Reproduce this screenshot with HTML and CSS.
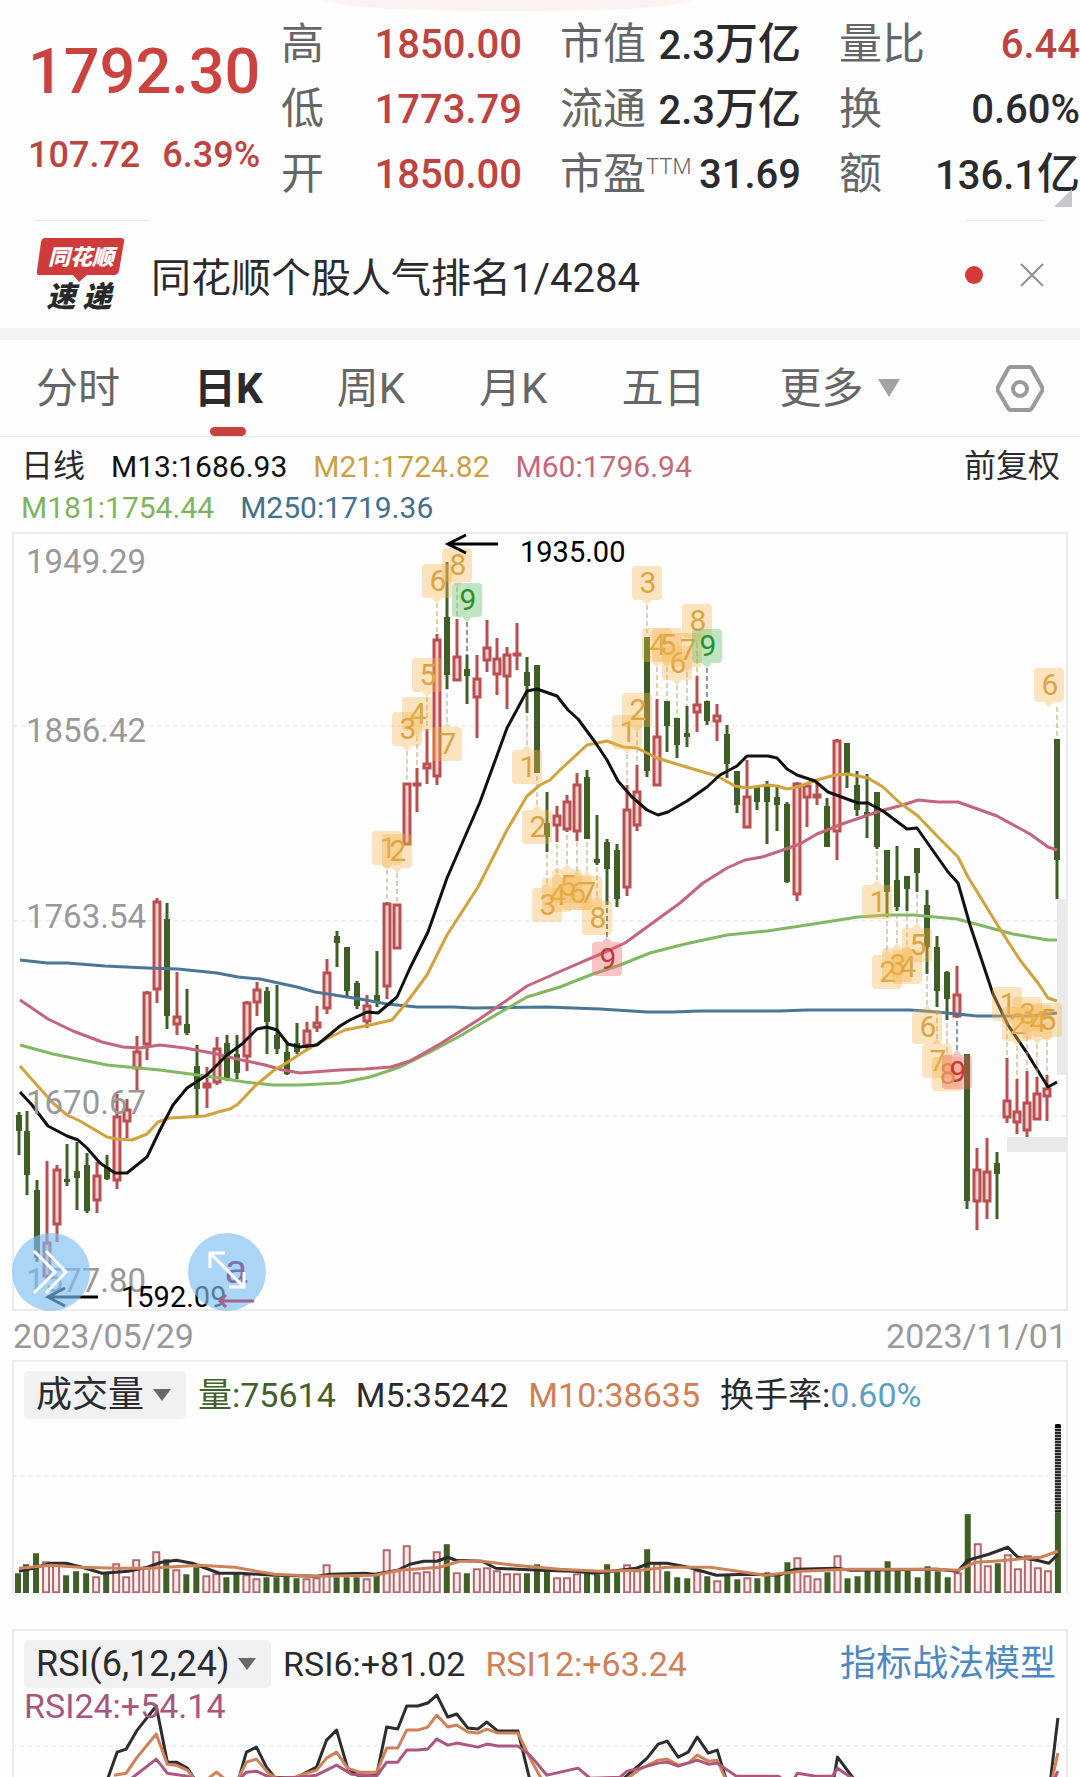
FILE: index.html
```html
<!DOCTYPE html>
<html lang="zh-CN">
<head>
  <meta charset="utf-8">
  <meta name="viewport" content="width=device-width, initial-scale=1">
  <title>日K</title>
  <link rel="stylesheet" href="styles.css">
</head>
<body>
  <!-- Quote -->
  <header class="quote">
    <div class="quote-main">
      <div class="price">1792.30</div>
      <div class="change"><span>107.72</span><span>6.39%</span></div>
    </div>
    <dl class="stats">
      <div class="stat"><dt>高</dt><dd class="up">1850.00</dd></div>
      <div class="stat"><dt>市值</dt><dd>2.3<span class="unit">万亿</span></dd></div>
      <div class="stat"><dt>量比</dt><dd class="up">6.44</dd></div>
      <div class="stat"><dt>低</dt><dd class="up">1773.79</dd></div>
      <div class="stat"><dt>流通</dt><dd>2.3<span class="unit">万亿</span></dd></div>
      <div class="stat"><dt>换</dt><dd>0.60%</dd></div>
      <div class="stat"><dt>开</dt><dd class="up">1850.00</dd></div>
      <div class="stat"><dt>市盈<sup>TTM</sup></dt><dd>31.69</dd></div>
      <div class="stat"><dt>额</dt><dd>136.1<span class="unit">亿</span></dd></div>
    </dl>
    <span class="corner"></span>
  </header>

  <!-- News -->
  <section class="news">
    <div class="news-lines"><span></span><span></span></div>
    <div class="news-row">
      <svg class="logo" viewBox="0 0 90 74" role="img" aria-label="同花顺速递">
        <path d="M9 0h76q4 0 3 4l-5 29q-1 4-5 4H51l-8 7-6-7H4q-4 0-3-4L5 4q1-4 4-4z" fill="#cf3b3a"/>
        <text class="logo-top" x="45" y="27">同花顺</text>
        <text class="logo-bottom" x="43" y="69">速 递</text>
      </svg>
      <a class="news-title" href="#">同花顺个股人气排名1/4284</a>
      <span class="dot"></span>
      <button class="close" aria-label="关闭">
        <svg viewBox="0 0 24 24"><path d="M1 1l22 22M23 1L1 23"/></svg>
      </button>
    </div>
  </section>

  <!-- Tabs -->
  <nav class="tabs">
    <button>分时</button>
    <button class="active">日K</button>
    <button>周K</button>
    <button>月K</button>
    <button>五日</button>
    <button class="more">更多<i class="arrow"></i></button>
    <button class="settings" aria-label="设置">
      <svg viewBox="0 0 48 48">
        <path d="M15 2h18q2 0 3 2l10 18q1 2 0 4L36 43q-1 2-3 2H15q-2 0-3-2L2 26q-1-2 0-4L12 4q1-2 3-2z"/>
        <circle cx="24" cy="24" r="7"/>
      </svg>
    </button>
  </nav>

  <!-- Candles -->
  <section class="legend">
    <div class="legend-row">
      <span class="period">日线</span>
      <span class="m13">M13:1686.93</span>
      <span class="m21">M21:1724.82</span>
      <span class="m60">M60:1796.94</span>
      <button class="adjust">前复权</button>
    </div>
    <div class="legend-row">
      <span class="m181">M181:1754.44</span>
      <span class="m250">M250:1719.36</span>
    </div>
  </section>
  <section class="candles">
    <svg id="candles" viewBox="0 532 1080 780"></svg>
    <button class="float forward" aria-label="下一页">
      <svg viewBox="0 0 78 78"><path d="M22 18l21 21-21 21M34 18l20 21-20 21"/></svg>
    </button>
    <button class="float expand" aria-label="全屏">
      <svg viewBox="0 0 78 78">
        <text class="mark" x="48" y="50">a</text>
        <path d="M22 35V20h15M22 20l34 34M41 54h15V39"/>
        <path class="mark-line" d="M66 68H32M38 62l-6 6 6 6"/>
      </svg>
    </button>
  </section>
  <div class="dates"><time>2023/05/29</time><time>2023/11/01</time></div>

  <!-- Volume -->
  <section class="panel volume">
    <div class="panel-head">
      <label class="picker"><select aria-label="指标"><option>成交量</option></select><i class="arrow"></i></label>
      <span class="down">量:75614</span>
      <span class="ink">M5:35242</span>
      <span class="orange">M10:38635</span>
      <span class="ink">换手率:<b class="rate">0.60%</b></span>
    </div>
    <svg id="volume" viewBox="15 1424 1050 169"></svg>
  </section>

  <!-- RSI -->
  <section class="panel rsi">
    <div class="panel-head">
      <label class="picker"><select aria-label="指标"><option>RSI(6,12,24)</option></select><i class="arrow"></i></label>
      <span class="ink">RSI6:+81.02</span>
      <span class="orange">RSI12:+63.24</span>
      <a class="model" href="#">指标战法模型</a>
    </div>
    <div class="rsi-body">
      <span class="rsi24">RSI24:+54.14</span>
      <svg id="rsi" viewBox="15 1691 1050 86"></svg>
    </div>
  </section>

  <script src="chart.js"></script>
</body>
</html>
```

FILE: styles.css
```css
* {
  box-sizing: border-box;
}

body {
  margin: 0;
  background: #fefefe;
  color: #2b2b2d;
  font-family: Roboto, "Noto Sans CJK SC", sans-serif;
  overflow-x: hidden;
}

button, select {
  border: none;
  padding: 0;
  margin: 0;
  background: none;
  font: inherit;
  color: inherit;
}

a {
  color: inherit;
  text-decoration: none;
}

svg {
  display: block;
}

.ink { color: #2b2b2d; }
.up { color: #bf4340; }
.down { color: #41602a; }
.orange { color: #d08056; }

/* quote */
.quote {
  position: relative;
  display: flex;
  padding-top: 12px;
  background: radial-gradient(ellipse 190px 12px at 47% 0, #fcf2f1 90%, transparent);
}

.quote-main {
  flex: 0 0 281px;
  padding: 22px 0 0 28px;
  font-weight: 500;
  white-space: nowrap;
}

.price {
  font-size: 63px;
  line-height: 76px;
  color: #cb423e;
}

.change {
  display: flex;
  gap: 22px;
  padding-top: 22px;
  font-size: 36px;
  line-height: 46px;
  color: #bf4340;
}

.stats {
  flex: 1;
  display: grid;
  grid-template-columns: repeat(3, 1fr);
  column-gap: 38px;
  margin: 0;
}

.stat {
  display: flex;
  justify-content: space-between;
  height: 65px;
  line-height: 65px;
  white-space: nowrap;
}

.stat dt {
  font-size: 43px;
  color: #666;
}

.stat dt sup {
  font-size: 22px;
  font-weight: 300;
  line-height: 0;
}

.stat dd {
  margin: 0;
  font-size: 40px;
  font-weight: 500;
}

.stat .unit {
  font-size: 43px;
}

.corner {
  position: absolute;
  right: 8px;
  bottom: 0;
  border: 9px solid transparent;
  border-right-color: #c9c7cb;
  border-bottom-color: #c9c7cb;
}

/* news */
.news {
  padding-top: 13px;
  border-bottom: 12px solid #f4f3f5;
}

.news-lines {
  display: flex;
  justify-content: space-between;
  padding: 0 36px;
}

.news-lines span {
  width: 112px;
  border-top: 1px solid #e4e4e4;
}

.news-lines span:last-child {
  width: 78px;
}

.news-row {
  display: flex;
  align-items: center;
  height: 107px;
  padding: 0 36px;
}

.logo {
  width: 90px;
  height: 74px;
}

.logo text {
  font-style: italic;
  font-weight: 900;
  text-anchor: middle;
}

.logo-top {
  font-size: 22px;
  fill: #fff;
}

.logo-bottom {
  font-size: 29px;
  fill: #29292b;
}

.news-title {
  flex: 1;
  padding-left: 25px;
  font-size: 40px;
}

.dot {
  width: 18px;
  height: 18px;
  border-radius: 50%;
  background: #d53a37;
}

.close {
  width: 24px;
  height: 24px;
  margin-left: 37px;
}

.close svg {
  fill: none;
  stroke: #8f8f8f;
  stroke-width: 2;
}

/* tabs */
.tabs {
  display: flex;
  gap: 74px;
  height: 97px;
  padding: 2px 36px 0;
  border-bottom: 1px solid #e6e6e6;
  font-size: 42px;
  line-height: 94px;
  color: #666;
}

.tabs button {
  position: relative;
  white-space: nowrap;
}

.tabs .active {
  font-weight: bold;
  color: #2b2b2d;
}

.tabs .active::after {
  content: "";
  position: absolute;
  left: 50%;
  bottom: 0;
  width: 36px;
  height: 9px;
  margin-left: -18px;
  border-radius: 5px;
  background: #c8433e;
}

.arrow {
  display: inline-block;
  border: 11px solid transparent;
  border-top: 18px solid #a2a2a2;
  border-bottom: 0;
}

.more .arrow {
  margin-left: 15px;
  vertical-align: 6px;
}

.tabs .settings {
  margin-left: auto;
}

.settings svg {
  width: 48px;
  height: 48px;
  fill: none;
  stroke: #9a9a9a;
  stroke-width: 4;
}

/* legend */
.legend {
  padding: 9px 20px 4px 21px;
  font-size: 30px;
}

.legend-row {
  display: flex;
  gap: 26px;
  height: 41px;
  line-height: 41px;
}

.period { font-size: 32px; }
.m13 { color: #111; }
.m21 { color: #cba043; }
.m60 { color: #c56a7c; }
.m181 { color: #7fb45c; }
.m250 { color: #43708f; }

.adjust {
  margin-left: auto;
  font-size: 32px;
}

/* candle chart */
.candles {
  position: relative;
}

.frame {
  fill: none;
  stroke: #ececec;
  stroke-width: 2;
}

.grid {
  stroke: #e6e3e6;
  stroke-width: 1;
  stroke-dasharray: 5 3;
}

.shade {
  fill: #eaeaea;
}

.axis {
  font-size: 33px;
  fill: #999;
}

.extreme {
  font-size: 29px;
  fill: #000;
}

.pointer {
  fill: none;
  stroke: #000;
  stroke-width: 3;
}

.line {
  fill: none;
  stroke-width: 3;
  stroke-linejoin: round;
}

.badge path {
  opacity: 0.38;
}

.badge text {
  font-size: 30px;
  text-anchor: middle;
}

.badge line {
  stroke-dasharray: 5 3;
}

.float {
  position: absolute;
  bottom: 1px;
  width: 78px;
  height: 78px;
  border-radius: 50%;
  background: rgba(126, 190, 243, 0.65);
}

.float path {
  fill: none;
  stroke: #fff;
  stroke-width: 3;
}

.forward { left: 12px; }
.expand { left: 188px; }

.float .mark {
  font: 40px "Liberation Sans", sans-serif;
  text-anchor: middle;
  fill: #7c6fae;
}

.float .mark-line {
  stroke: #a0668f;
}

.dates {
  display: flex;
  justify-content: space-between;
  padding: 0 13px;
  font-size: 34px;
  line-height: 48px;
  color: #999;
}

/* indicator panels */
.panel {
  margin: 0 12px;
  border: 2px solid #ececec;
  border-bottom: none;
}

.panel-head {
  display: flex;
  align-items: center;
  gap: 20px;
  height: 62px;
  padding: 4px 10px 0;
  font-size: 34px;
  line-height: 48px;
  white-space: nowrap;
}

.picker {
  position: relative;
  display: block;
  margin-right: -8px;
}

.picker select {
  display: block;
  height: 48px;
  padding: 0 41px 0 12px;
  border-radius: 5px;
  background: #f1f1f3;
  font-size: 36px;
  appearance: none;
}

.picker .arrow {
  position: absolute;
  right: 15px;
  top: 18px;
  border-width: 9px;
  border-top: 12px solid #68686a;
  border-bottom: 0;
  pointer-events: none;
}

.rate {
  font-weight: normal;
  color: #5c9fc4;
}

.volume {
  margin-bottom: 36px;
}

.model {
  margin-left: auto;
  font-size: 36px;
  color: #4f87c2;
}

.rsi-body {
  position: relative;
  margin-top: -2px;
}

.rsi24 {
  position: absolute;
  left: 10px;
  top: 0;
  font-size: 34px;
  line-height: 30px;
  color: #a8567d;
}
```

FILE: chart.js
```js
var RED = '#b94f50';
var GREEN = '#3f5f26';

// [up, high, body top, body bottom, low]
var candles = [
  [0,1112,1115,1131,1155],[0,1111,1131,1175,1195],[0,1180,1190,1258,1262],[1,1161,1242,1277,1280],[1,1165,1169,1225,1242],
  [0,1144,1179,1182,1186],[0,1142,1171,1178,1210],[0,1153,1165,1211,1213],[1,1162,1175,1201,1213],[0,1155,1167,1179,1180],
  [1,1094,1116,1181,1189],[1,1099,1109,1122,1138],[1,1036,1051,1069,1090],[1,991,992,1045,1060],[1,898,901,990,1003],
  [0,903,919,1016,1029],[1,972,1016,1025,1035],[0,989,1024,1033,1035],[0,1045,1066,1089,1118],[1,1067,1083,1088,1108],
  [1,1037,1048,1083,1085],[0,1035,1043,1079,1081],[0,1035,1054,1073,1079],[1,1001,1002,1057,1071],[1,982,989,1003,1016],
  [0,987,991,1022,1054],[0,985,1035,1049,1054],[0,1043,1052,1074,1075],[0,1023,1043,1052,1054],[1,1022,1030,1046,1050],
  [1,1006,1022,1028,1032],[1,959,972,1009,1014],[0,931,936,943,967],[0,947,947,991,996],[0,981,983,1006,1009],
  [1,995,1005,1022,1028],[0,951,995,1002,1007],[1,902,903,987,999],[1,904,904,949,949],[1,783,783,845,845],
  [1,768,783,785,812],[1,729,763,769,784],[1,634,639,777,785],[0,562,617,675,689],[1,619,656,681,681],
  [0,655,669,676,704],[1,655,678,698,738],[1,620,647,661,672],[1,638,658,675,695],[1,647,654,677,709],
  [1,623,653,655,670],[0,657,672,686,713],[0,665,665,773,773],[0,792,823,837,852],[1,806,815,826,842],
  [1,795,801,830,832],[1,773,784,832,841],[0,770,777,839,839],[0,815,859,863,865],[0,839,842,869,905],
  [0,844,850,899,907],[1,785,809,888,896],[1,765,791,826,831],[0,637,637,771,777],[1,699,736,786,786],
  [0,701,701,726,752],[0,718,718,745,758],[0,706,733,737,747],[1,676,704,713,732],[0,701,701,721,725],
  [1,704,715,722,741],[0,725,734,764,778],[0,771,771,805,813],[1,760,796,828,828],[0,787,787,802,810],
  [0,781,784,802,844],[0,787,797,805,831],[0,802,804,882,883],[1,782,783,895,901],[1,783,785,798,827],
  [1,782,794,798,805],[0,798,806,847,847],[1,739,740,832,860],[0,743,743,775,788],[0,771,785,810,816],
  [0,774,812,815,838],[0,792,792,847,849],[0,850,850,892,917],[0,846,880,907,911],[0,876,876,889,911],
  [0,848,848,873,892],[0,890,905,947,974],[0,936,947,991,1007],[0,971,972,999,1020],[1,966,994,1017,1018],
  [0,1054,1054,1201,1209],[1,1148,1169,1202,1230],[1,1138,1171,1202,1219],[0,1152,1163,1174,1219],[1,1058,1100,1118,1123],
  [1,1079,1111,1123,1134],[1,1071,1102,1131,1137],[1,1077,1093,1120,1120],[1,1075,1088,1097,1121],[0,739,739,860,899]
];

var volumes = [
  20,29,40,32,29,18,22,20,17,20,30,17,34,26,42,34,24,19,26,18,20,16,20,19,15,16,16,17,15,15,16,29,16,16,16,
  15,18,44,23,48,21,22,42,49,21,20,25,26,23,20,20,20,29,25,16,16,20,20,19,29,23,29,23,44,30,22,16,15,23,17,
  13,19,14,16,15,21,17,31,36,18,15,21,38,15,17,23,24,32,24,24,16,27,22,16,21,79,50,28,30,39,25,38,26,23,81
];

// [digit, candle index, centre y, points down]
var badges = [
  [1,37,848,1],[2,38,851,1],[4,40,714,1],[3,39,729,1],[5,41,675,1],[6,42,581,1],[7,43,744,0],[8,44,565,1],[9,45,600,1],
  [1,51,767,0],[2,52,827,0],[3,53,905,0],[4,54,895,0],[5,55,886,0],[6,56,893,0],[7,57,893,0],[8,58,918,0],[9,59,959,0],
  [1,61,732,1],[2,62,710,1],[3,63,583,1],[4,64,645,1],[5,65,645,1],[6,66,663,1],[7,67,650,1],[8,68,621,1],[9,69,646,1],
  [1,86,902,0],[2,87,972,0],[3,88,965,0],[4,89,967,0],[5,90,945,0],[6,91,1027,0],[7,92,1061,0],[8,93,1074,0],[9,94,1072,0],
  [1,99,1004,1],[2,100,1024,1],[3,101,1014,1],[4,102,1022,1],[5,103,1020,1],[6,104,685,1]
];

var lines = {
  m250: '20,960 47,963 67,963 105,966 147,968 178,969 217,973 238,977 260,979 297,987 315,992 360,999 387,1004 417,1007 453,1007 473,1008 547,1007 573,1008 600,1009 647,1012 673,1012 700,1011 780,1011 807,1010 910,1010 937,1012 977,1016 1030,1016 1057,1013',
  m181: '20,1045 53,1054 107,1065 160,1070 213,1077 245,1082 273,1085 300,1085 340,1083 370,1077 400,1067 430,1052 460,1036 487,1020 527,997 560,987 593,974 620,965 650,953 685,944 727,935 767,931 807,925 858,917 887,915 913,915 957,919 1013,934 1048,940 1057,940',
  m60: '20,1000 48,1019 73,1031 102,1042 123,1047 140,1048 160,1045 185,1048 217,1054 237,1059 265,1065 283,1070 300,1073 340,1070 365,1069 391,1067 410,1061 440,1044 478,1020 500,1005 527,986 568,968 603,953 625,943 647,927 680,903 703,883 727,868 745,860 762,857 780,851 800,844 817,834 842,824 880,811 903,805 918,800 938,802 958,802 997,816 1030,834 1048,847 1057,850',
  m21: '20,1066 35,1083 53,1103 67,1115 80,1121 107,1137 117,1139 132,1140 147,1134 158,1122 170,1118 205,1116 218,1112 230,1109 238,1104 255,1086 273,1071 288,1062 300,1054 320,1042 345,1030 370,1025 392,1020 407,1002 427,975 447,935 478,887 507,830 527,796 540,785 550,780 560,770 587,745 607,741 623,747 637,748 657,758 683,766 717,776 735,786 747,788 767,785 777,786 787,789 797,787 817,780 835,775 848,774 868,778 883,787 900,803 918,816 937,836 958,857 968,877 1000,929 1020,960 1038,983 1048,998 1057,1001',
  m13: '20,1092 32,1105 48,1126 67,1136 78,1140 87,1148 100,1163 115,1173 127,1173 147,1157 160,1130 173,1105 187,1088 207,1075 227,1055 242,1044 257,1029 267,1027 277,1030 288,1044 300,1047 317,1045 340,1026 350,1020 367,1012 378,1013 397,997 410,968 428,932 447,878 467,832 480,802 507,728 527,691 537,689 557,696 568,710 578,719 595,742 607,760 618,781 632,797 647,810 658,815 668,812 687,801 707,787 720,775 737,766 747,756 768,756 777,758 787,769 797,775 815,781 828,792 858,803 868,803 883,811 907,829 917,828 948,872 958,883 970,925 993,994 1008,1025 1027,1053 1048,1087 1057,1082',
  v5: '20,1571 34,1568 52,1563 67,1563 83,1567 103,1573 129,1571 148,1567 162,1562 177,1560 193,1563 220,1573 241,1573 275,1575 317,1576 331,1574 365,1573 375,1574 398,1570 410,1564 424,1561 437,1561 448,1557 456,1560 482,1561 496,1568 540,1570 574,1571 595,1573 636,1568 650,1563 667,1563 688,1567 716,1575 747,1574 778,1575 795,1569 836,1568 850,1570 936,1569 957,1571 967,1560 988,1554 1007,1547 1017,1557 1036,1560 1048,1563 1057,1554',
  v10: '20,1568 52,1565 80,1567 120,1568 150,1568 200,1565 235,1567 275,1574 317,1576 375,1575 400,1570 440,1567 460,1561 482,1561 515,1565 560,1569 600,1571 640,1570 667,1567 710,1567 765,1575 800,1571 850,1569 936,1569 957,1570 975,1562 993,1561 1040,1557 1057,1551',
  r6: '108,1780 118,1752 127,1749 138,1730 157,1706 168,1762 177,1762 188,1768 196,1780 239,1780 247,1752 257,1747 267,1767 275,1777 296,1778 317,1767 327,1740 337,1730 348,1768 358,1775 377,1775 387,1727 398,1729 407,1706 418,1706 428,1703 437,1695 448,1717 457,1714 468,1728 478,1729 487,1722 498,1731 518,1731 530,1780 624,1778 647,1758 658,1744 667,1741 678,1757 688,1752 697,1737 708,1753 717,1750 726,1780 833,1780 837,1757 852,1777 860,1785 1049,1785 1057,1718',
  r12: '115,1775 127,1773 138,1757 157,1734 168,1764 177,1765 188,1770 196,1780 207,1780 217,1772 227,1780 239,1778 247,1762 257,1759 270,1774 285,1782 298,1776 317,1770 327,1758 337,1752 348,1768 360,1772 377,1772 387,1748 398,1748 407,1730 418,1730 428,1727 437,1715 448,1727 457,1725 468,1732 478,1733 487,1729 498,1733 518,1733 530,1758 545,1785 622,1782 640,1769 658,1760 667,1759 678,1765 688,1763 697,1755 708,1761 717,1760 728,1785 1050,1785 1057,1753',
  r24: '130,1780 157,1759 168,1773 188,1776 200,1782 239,1780 247,1772 257,1771 272,1778 300,1777 317,1775 337,1765 352,1774 377,1776 387,1762 398,1762 407,1750 418,1750 428,1749 437,1739 448,1745 457,1743 478,1747 487,1744 498,1746 518,1746 530,1755 547,1775 578,1768 590,1778 620,1777 627,1771 640,1768 658,1763 667,1762 678,1766 697,1760 708,1764 717,1763 736,1776 778,1776 790,1785 797,1773 815,1776 832,1776 837,1768 850,1777 870,1785 1051,1785 1057,1771'
};

function candleX(i) {
  return i === 0 ? 19 : 17 + i * 10;
}

function line(name, color) {
  return '<polyline class="line" stroke="' + color + '" points="' + lines[name] + '"/>';
}

function rect(x, y, w, h, attrs) {
  return '<rect x="' + x + '" y="' + y + '" width="' + w + '" height="' + h + '" ' + attrs + '/>';
}

function grid(y) {
  return '<line class="grid" x1="13" x2="1067" y1="' + y + '" y2="' + y + '"/>';
}

function drawCandle(c, i) {
  var x = candleX(i);
  if (!c[0]) {
    return rect(x - 1.5, c[1], 3, c[4] - c[1], 'fill="' + GREEN + '"') +
      rect(x - 3, c[2], 6, c[3] - c[2], 'fill="' + GREEN + '"');
  }
  return rect(x - 1.5, c[1], 3, c[2] - c[1], 'fill="' + RED + '"') +
    rect(x - 1.5, c[3], 3, c[4] - c[3], 'fill="' + RED + '"') +
    rect(x - 3, c[2] + 1, 6, Math.max(c[3] - c[2] - 2, 1), 'fill="#fbd0ce" stroke="' + RED + '" stroke-width="3"');
}

function drawBadge(b) {
  var x = candleX(b[1]);
  var c = candles[b[1]];
  var cx = Math.min(x, 1049);
  var y = b[2];
  var fill = '#f5b955', ink = '#dca542', dash = '#c0a565';
  if (b[0] === 9) {
    fill = b[3] ? '#5cbd62' : '#ee6468';
    ink = b[3] ? '#2f8d2c' : '#c93636';
    dash = '#333';
  }
  var s = b[3] ? 1 : -1;
  var tip = y + s * 22;
  var end = b[3] ? c[1] : c[4];
  var d = 'M' + (cx - 11) + ' ' + (y - 17 * s) + 'h22q4 0 4 ' + 4 * s + 'v' + 26 * s + 'q0 ' + 4 * s + '-4 ' + 4 * s +
    'h-6l-5 ' + 5 * s + '-5 ' + -5 * s + 'h-6q-4 0-4 ' + -4 * s + 'v' + -26 * s + 'q0 ' + -4 * s + ' 4 ' + -4 * s + 'z';
  return '<g class="badge"><line x1="' + x + '" x2="' + x + '" y1="' + tip + '" y2="' + end + '" stroke="' + dash + '"/>' +
    '<path d="' + d + '" fill="' + fill + '"/>' +
    '<text x="' + (cx + 1) + '" y="' + (y + 10) + '" fill="' + ink + '">' + b[0] + '</text></g>';
}

function drawVolume(v, i) {
  var x = candleX(i);
  if (candles[i][0]) {
    return rect(x - 3, 1594 - v, 6, v - 2, 'fill="#fdeceb" stroke="#b3686b" stroke-width="2"');
  }
  return rect(x - 3, 1593 - v, 6, v, 'fill="' + GREEN + '"');
}

var axis = [['1949.29', 573], ['1856.42', 742], ['1763.54', 928], ['1670.67', 1114], ['1577.80', 1292]];

document.getElementById('candles').innerHTML =
  rect(13, 533, 1054, 777, 'class="frame"') +
  grid(726) + grid(921) + grid(1116) +
  rect(1057, 899, 10, 176, 'class="shade"') +
  rect(1007, 1137, 60, 15, 'class="shade"') +
  candles.map(drawCandle).join('') +
  line('m250', '#4b7797') + line('m181', '#83b862') + line('m60', '#c4657c') +
  line('m21', '#d2a23c') + line('m13', '#111') +
  badges.map(drawBadge).join('') +
  axis.map(function (a) {
    return '<text class="axis" x="26" y="' + a[1] + '">' + a[0] + '</text>';
  }).join('') +
  '<path class="pointer" d="M498 544H448M466 535l-18 9 18 9"/>' +
  '<text class="extreme" x="520" y="562">1935.00</text>' +
  '<path class="pointer" d="M98 1297H48M65 1288l-17 9 17 9"/>' +
  '<text class="extreme" x="121" y="1307">1592.09</text>';

var stripes = '';
for (var y = 1426; y < 1512; y += 3) {
  stripes += rect(1054, y, 6, 2, 'fill="#222"');
}

document.getElementById('volume').innerHTML =
  grid(1476) + volumes.map(drawVolume).join('') +
  rect(1054, 1424, 6, 88, 'fill="#aaa"') + stripes + rect(1054, 1424, 6, 4, 'rx="2" fill="#000"') +
  line('v5', '#2d2d2d') + line('v10', '#cf8258');

document.getElementById('rsi').innerHTML =
  grid(1746) + line('r6', '#2d2d2d') + line('r12', '#cf8258') + line('r24', '#ad5680');
```
